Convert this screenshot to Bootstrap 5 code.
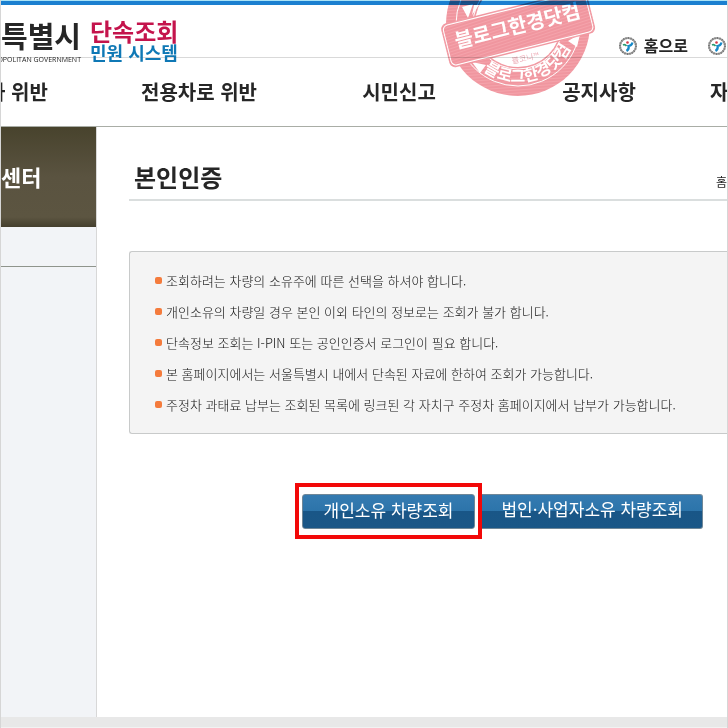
<!DOCTYPE html>
<html lang="ko">
<head>
<meta charset="utf-8">
<meta name="viewport" content="width=device-width, initial-scale=1">
<title>단속조회 민원 시스템</title>
<link href="https://cdn.jsdelivr.net/npm/bootstrap@5.3.0/dist/css/bootstrap.min.css" rel="stylesheet">
<style>
body{font-family:"Noto Sans CJK KR","Liberation Sans",sans-serif;color:#262626;background:#fff}
a{color:inherit;text-decoration:none}
.frame{border:1px solid #d6d6d6;border-top:0}
.topline{height:5px;background:#1b80d0;border-top:1px solid #a9e3f7}
.brandbar{height:53px;border-bottom:1px solid #d9d9d9}
.logo{margin-top:10px;gap:9px}
.city{width:80px}
.city-name{font-size:29px;line-height:40px;font-weight:700}
.city-en{font:7px/10px "Open Sans","Liberation Sans",sans-serif;white-space:nowrap}
.sys{font-weight:700;white-space:nowrap;padding-top:3px}
.sys-a{font-size:24px;line-height:26px;color:#c4144c}
.sys-b{font-size:18px;line-height:16px;color:#0f78b5}
.util{font-size:16px;font-weight:700;line-height:24px;gap:6px;margin-top:28px}
.util svg{margin-top:3px}
.util-list{gap:19px}
.gnb{height:69px;border-bottom:1px solid #a9ada6;font-size:20px;font-weight:700;line-height:30px;padding-top:19px}
.gnb ul{margin-left:-102px}
.gnb li{flex:0 0 200px;text-align:center;white-space:nowrap}
.gnb li:last-child{flex:0 0 auto;padding-left:11px}
.side{flex:0 0 96px;background:#f2f4f7;border-right:1px solid #d8d8d8}
.side-title{height:100px;background:linear-gradient(#48432d,#5a5340 50%,#5c5541 90%,#443f2d);color:#fff;font-size:22px;font-weight:700;line-height:98px}
.side-item{height:40px;border-bottom:1px solid #8f948c}
.main{padding:0 0 0 32px;min-height:590px}
.page-head{height:74px;border-bottom:2px solid #dadede;padding:32px 0 0 5px}
.page-head h1{font-size:24px;font-weight:700;line-height:36px}
.crumb{font-size:12px;line-height:18px;margin-top:14px}
.notice{margin-top:50px;border:1px solid #c8caca;border-right:0;border-radius:3px 0 0 3px;background:#f4f4f4;padding:13px 0 13px 25px;font-size:13px;line-height:31px;font-weight:300;color:#111}
.notice li{gap:4px;white-space:nowrap}
.dot{width:7px;height:7px;border-radius:2px;background:#f47b3c}
.acts{margin:49px 24px 0 0}
.focus-box{border:4px solid #f20808;padding:7px 3px 6px}
.act{height:35px;border:1px solid #6f8798;border-radius:3px;background:linear-gradient(#357bb1,#2c74aa 50%,#195687 50%,#1a5787);color:#fff;font-size:17px;line-height:28px;padding:0 21px 4px;white-space:nowrap}
.act-corp{border-left:0;border-radius:0 3px 3px 0;padding:0 19px 4px}
.foot{height:11px;background:#e8e8e8;border-bottom:1px solid #f2f2f2}
.stamp{left:435px;top:0;mix-blend-mode:multiply;pointer-events:none}
</style>
<script src="https://cdn.jsdelivr.net/npm/bootstrap@5.3.0/dist/js/bootstrap.bundle.min.js"></script>
</head>
<body>
<div class="frame position-relative overflow-hidden">
<header>
<div class="topline"></div>
<div class="brandbar d-flex justify-content-between">
<a href="#" class="logo d-flex">
<div class="city d-flex flex-column align-items-end"><span class="city-name text-nowrap">서울특별시</span><span class="city-en">SEOUL METROPOLITAN GOVERNMENT</span></div>
<div class="sys d-flex flex-column"><span class="sys-a">단속조회</span><span class="sys-b">민원 시스템</span></div>
</a>
<div class="util-list d-flex">
<a href="#" class="util d-flex"><svg width="20" height="20" viewBox="0 0 20 20"><use href="#emb"/></svg>홈으로</a>
<a href="#" class="util d-flex" aria-label="서울시"><svg width="20" height="20" viewBox="0 0 20 20"><g id="emb"><circle cx="10" cy="10" r="8" fill="#fff" stroke="#a0a0a0" stroke-width="2"/><circle cx="10" cy="10" r="8" fill="none" stroke="#777" stroke-width="2" stroke-dasharray="1 1.500"/><circle cx="9.500" cy="6.500" r="1.300" fill="#d83848"/><path d="M5 9Q7 8 8.500 10" fill="none" stroke="#2a9a70" stroke-width="1.800"/><path d="M14.500 6.500Q13.500 10 10.500 10Q11.500 13 8.500 15" fill="none" stroke="#1789c8" stroke-width="2.200"/></g></svg></a>
</div>
</div>
<nav class="gnb"><ul class="list-unstyled d-flex mb-0"><li><a href="#">주정차 위반</a></li><li><a href="#">전용차로 위반</a></li><li><a href="#">시민신고</a></li><li><a href="#">공지사항</a></li><li><a href="#">자</a></li></ul></nav>
</header>
<div class="d-flex">
<aside class="side"><div class="side-title">센터</div><div class="side-item"></div></aside>
<main class="main flex-grow-1">
<div class="page-head d-flex justify-content-between"><h1>본인인증</h1><span class="crumb">홈</span></div>
<ul class="notice list-unstyled mb-0">
<li class="d-flex align-items-center"><i class="dot"></i>조회하려는 차량의 소유주에 따른 선택을 하셔야 합니다.</li>
<li class="d-flex align-items-center"><i class="dot"></i>개인소유의 차량일 경우 본인 이외 타인의 정보로는 조회가 불가 합니다.</li>
<li class="d-flex align-items-center"><i class="dot"></i>단속정보 조회는 I-PIN 또는 공인인증서 로그인이 필요 합니다.</li>
<li class="d-flex align-items-center"><i class="dot"></i>본 홈페이지에서는 서울특별시 내에서 단속된 자료에 한하여 조회가 가능합니다.</li>
<li class="d-flex align-items-center"><i class="dot"></i>주정차 과태료 납부는 조회된 목록에 링크된 각 자치구 주정차 홈페이지에서 납부가 가능합니다.</li>
</ul>
<div class="acts d-flex justify-content-end align-items-center"><div class="focus-box"><button class="act d-block">개인소유 차량조회</button></div><button class="act act-corp">법인·사업자소유 차량조회</button></div>
</main>
</div>
<footer class="foot"></footer>
<svg class="stamp position-absolute" width="164" height="100" viewBox="0 0 164 100" font-family="Noto Sans CJK KR, sans-serif" font-weight="700">
<defs>
<pattern id="grain" width="8" height="3" patternUnits="userSpaceOnUse" patternTransform="rotate(-4)"><rect width="8" height="3" fill="#f4a3ab"/><path d="M0 1H8" stroke="#ec8994"/></pattern>
<path id="arc" d="M24 24A58 58 0 0 0 140 24"/>
</defs>
<circle cx="82" cy="24" r="72" fill="url(#grain)"/>
<circle cx="82" cy="24" r="62" fill="none" stroke="#fff" stroke-width="1"/>
<circle cx="82" cy="24" r="43" fill="#fff"/>
<circle cx="82" cy="24" r="45" fill="none" stroke="#fff" stroke-width="1"/>
<path d="M36 62 50 65 44 73ZM144 34 132 41 141 47ZM26 7 37 4 32 18ZM38 5 43 5 36 15Z" fill="#fff"/>
<text font-size="16" fill="#fff"><textPath href="#arc" startOffset="58%" text-anchor="middle">블로그한경닷컴</textPath></text>
<text x="90" y="61" transform="rotate(-12 90 61)" font-size="8" font-weight="300" fill="#e893a0" text-anchor="middle">블코나™</text>
<g transform="rotate(-14 82 28)">
<rect x="7" y="6" width="150" height="45" rx="6" fill="url(#grain)"/>
<rect x="9" y="8" width="146" height="41" rx="5" fill="none" stroke="#fff"/>
<text x="82" y="33" font-size="20" fill="#fff" text-anchor="middle">블로그한경닷컴</text>
</g>
</svg>
</div>
</body>
</html>
